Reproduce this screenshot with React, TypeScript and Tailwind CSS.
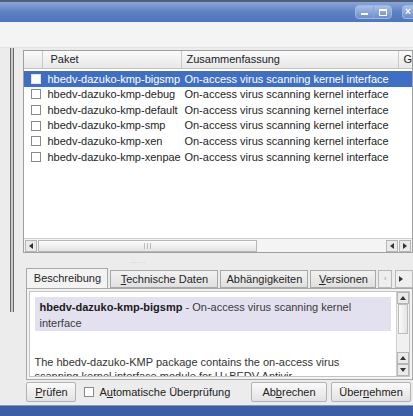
const PACKAGES = [
  "hbedv-dazuko-kmp-bigsmp",
  "hbedv-dazuko-kmp-debug",
  "hbedv-dazuko-kmp-default",
  "hbedv-dazuko-kmp-smp",
  "hbedv-dazuko-kmp-xen",
  "hbedv-dazuko-kmp-xenpae",
];

const SUMMARY = "On-access virus scanning kernel interface";

const Check = ({ light }: { light?: boolean }) => (
  <span
    className={`inline-block w-[10px] h-[10px] border ${
      light ? "border-[#dfe6f3] bg-white" : "border-[#8a8a8a] bg-white"
    }`}
  />
);

const Arrow = ({ dir }: { dir: "l" | "r" | "u" | "d" }) => {
  const cls = {
    l: "border-y-[3px] border-y-transparent border-r-[4px] border-r-[#333]",
    r: "border-y-[3px] border-y-transparent border-l-[4px] border-l-[#333]",
    u: "border-x-[3px] border-x-transparent border-b-[4px] border-b-[#333]",
    d: "border-x-[3px] border-x-transparent border-t-[4px] border-t-[#333]",
  }[dir];
  return <span className={`block w-0 h-0 ${cls}`} />;
};

const ScrollBtn = ({ dir }: { dir: "l" | "r" | "u" | "d" }) => (
  <div className="w-[12px] h-[12px] flex items-center justify-center bg-[#eaeaea] border border-[#b5b5b5]">
    <Arrow dir={dir} />
  </div>
);

const TitleBar = () => (
  <div className="h-[22px] border-t-2 border-[#50607a] bg-gradient-to-b from-[#8aa6d8] via-[#5c81c4] to-[#4f76bc] flex items-center justify-end gap-[10px] pr-0">
    <div className="flex h-[14px] rounded-[4px] border border-[#9fb6e0] bg-gradient-to-b from-[#a9bfe6] to-[#6d8fcc] overflow-hidden">
      <div className="w-[17px] flex items-end justify-center pb-[3px]">
        <span className="block w-[7px] h-[2px] bg-white" />
      </div>
      <div className="w-px bg-[#8aa3d3]" />
      <div className="w-[17px] flex items-center justify-center">
        <span className="block w-[8px] h-[7px] border border-white border-t-2" />
      </div>
    </div>
    <div className="w-[11px] h-[14px] rounded-l-[4px] border border-r-0 border-[#9fb6e0] bg-gradient-to-b from-[#a9bfe6] to-[#6d8fcc] text-white text-[10px] leading-[12px] pl-[2px] font-bold">
      ×
    </div>
  </div>
);

const PackageTable = () => (
  <div className="h-[203px] border border-[#a0a0a0] bg-white flex flex-col">
    <div className="h-[18px] flex border-b border-[#c4c4c4] bg-gradient-to-b from-[#fafafa] to-[#e8e8e8] text-[#222]">
      <div className="w-[19px] border-r border-[#c8c8c8]" />
      <div className="w-[139px] border-r border-[#c8c8c8] pl-[7px] leading-[17px]">Paket</div>
      <div className="w-[217px] border-r border-[#c8c8c8] pl-[4px] leading-[17px]">Zusammenfassung</div>
      <div className="pl-[4px] leading-[17px]">G</div>
    </div>
    <div className="pt-[2px]">
      {PACKAGES.map((name, i) => (
        <div
          key={name}
          className={`h-[15.6px] flex items-center whitespace-nowrap ${
            i === 0 ? "bg-[#3f6fc4] text-white" : "text-[#1e1e1e]"
          }`}
        >
          <div className="w-[22px] flex justify-center pl-[2px]">
            <Check light={i === 0} />
          </div>
          <div className="w-[137px] pl-[1px]">{name}</div>
          <div className="pl-[1px]">{SUMMARY}</div>
        </div>
      ))}
    </div>
    <div className="flex-1" />
    <div className="h-[14px] flex items-center bg-[#f4f4f4] border-t border-[#d0d0d0] px-[1px] gap-[1px]">
      <ScrollBtn dir="l" />
      <div className="w-[219px] h-[12px] bg-gradient-to-b from-[#fbfbfb] to-[#e4e4e4] border border-[#b8b8b8] flex justify-center items-center gap-[2px]">
        <span className="w-px h-[6px] bg-[#bbb]" />
        <span className="w-px h-[6px] bg-[#bbb]" />
        <span className="w-px h-[6px] bg-[#bbb]" />
      </div>
      <div className="flex-1" />
      <ScrollBtn dir="l" />
      <ScrollBtn dir="r" />
    </div>
  </div>
);

const Tab = ({ label, u, active, w }: { label: string; u?: number; active?: boolean; w: string }) => (
  <div
    className={`${w} flex items-center justify-center border border-[#a8a8a8] ${
      active
        ? "h-[20px] bg-[#f3f3f3] border-b-0 font-medium"
        : "h-[18px] bg-gradient-to-b from-[#f2f2f2] to-[#e0e0e0] self-end"
    }`}
  >
    {u === undefined ? (
      label
    ) : (
      <span>
        {label.slice(0, u)}
        <span className="underline">{label[u]}</span>
        {label.slice(u + 1)}
      </span>
    )}
  </div>
);

const Button = ({ label, u, w }: { label: string; u: number; w: string }) => (
  <div className={`${w} h-[20px] flex items-center justify-center border border-[#b2b2b2] rounded-[2px] bg-gradient-to-b from-[#fafafa] to-[#e2e2e2] text-[#222]`}>
    <span>
      {label.slice(0, u)}
      <span className="underline">{label[u]}</span>
      {label.slice(u + 1)}
    </span>
  </div>
);

const App = () => {
  return (
    <div className="w-[413px] h-[416px] overflow-hidden bg-[#ececec] text-[11px] text-[#222] font-['Liberation_Sans',Arial,sans-serif] flex flex-col">
      <TitleBar />
      <div className="h-[26px] bg-[#f4f4f4] border-b border-[#e2e2e2]" />
      <div className="flex-1 flex">
        {/* left pane edge */}
        <div className="w-[25px] flex justify-start pl-[10px] pt-[0px]">
          <div className="w-[4px] h-[264px] border-x border-[#6a6a6a] bg-[#c9c9c9]" />
        </div>
        <div className="flex-1 flex flex-col pt-[2px]">
          <PackageTable />
          <div className="h-[15px] flex justify-center items-center pr-[160px]">
            <span className="text-[#bbb] text-[8px] leading-none tracking-[1px]">.....</span>
          </div>
          <div className="flex items-end h-[20px] pl-[3px] text-[#262626]">
            <Tab label="Beschreibung" active w="w-[82px]" />
            <div className="w-[2px]" />
            <Tab label="Technische Daten" u={0} w="w-[108px]" />
            <div className="w-[2px]" />
            <Tab label="Abhängigkeiten" w="w-[88px]" />
            <div className="w-[2px]" />
            <Tab label="Versionen" u={0} w="w-[66px]" />
            <div className="w-[2px]" />
            <div className="w-[14px] h-[18px] self-end border border-[#b8b8b8] bg-[#eee] flex items-center justify-center text-[#999] text-[8px]">
              ‹
            </div>
            <div className="w-[3px]" />
            <div className="flex-1 h-[18px] self-end border border-[#b8b8b8] bg-[#eee] flex items-center pl-[3px]">
              <Arrow dir="r" />
            </div>
          </div>
          <div className="h-[92px] ml-[3px] border border-[#a8a8a8] bg-[#f3f3f3] p-[2px]">
            <div className="h-full bg-white border border-[#c4c4c4] flex">
              <div className="flex-1 flex flex-col">
                <div className="mx-[5px] mt-[5px] h-[34px] bg-[#e3e1f0] px-[4px] pt-[2px] leading-[16px] text-[#3a3a3a]">
                  <span className="font-bold text-[#1a1a1a]">hbedv-dazuko-kmp-bigsmp</span> - On-access virus scanning kernel interface
                </div>
                <div className="flex-1" />
                <div className="px-[4px] leading-[14px] text-[#333] whitespace-nowrap overflow-hidden h-[21px]">
                  The hbedv-dazuko-KMP package contains the on-access virus
                  <br />
                  scanning kernel interface module for H+BEDV Antivir
                </div>
              </div>
              <div className="w-[13px] flex flex-col bg-[#f0f0f0] border-l border-[#d0d0d0]">
                <ScrollBtn dir="u" />
                <div className="h-[30px] mx-[1px] bg-gradient-to-r from-[#fafafa] to-[#e4e4e4] border border-[#bcbcbc]" />
                <div className="flex-1" />
                <ScrollBtn dir="u" />
                <ScrollBtn dir="d" />
              </div>
            </div>
          </div>
          <div className="h-[24px] flex items-center gap-[4px] pl-[3px] pr-[2px]">
            <Button label="Prüfen" u={0} w="w-[50px]" />
            <div className="w-[150px] flex items-center gap-[5px] pl-[4px]">
              <Check />
              <span>
                A<span className="underline">u</span>tomatische Überprüfung
              </span>
            </div>
            <div className="flex-1" />
            <Button label="Abbrechen" u={2} w="w-[76px]" />
            <Button label="Übernehmen" u={4} w="w-[80px]" />
          </div>
        </div>
      </div>
      <div className="h-[11px] border-t border-[#7e98c8] bg-[#3b5ea6]" />
    </div>
  );
};

export default App;
